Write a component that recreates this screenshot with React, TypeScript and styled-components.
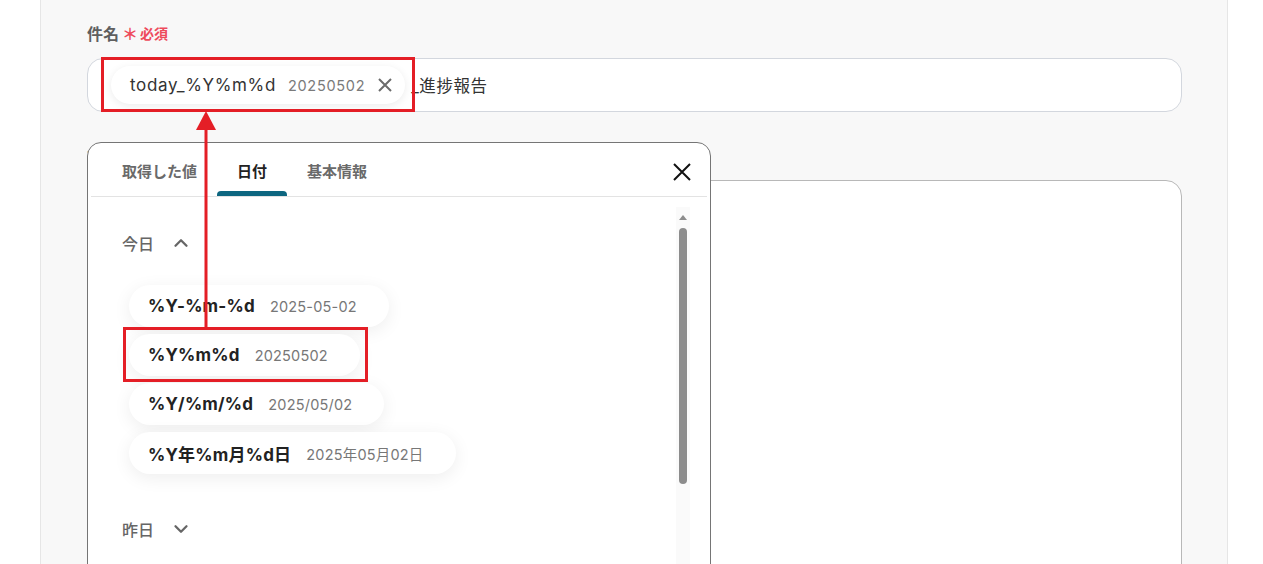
import React from "react";
import styled, { createGlobalStyle } from "styled-components";
import { ChevronDown, ChevronUp } from "lucide-react";

const GlobalStyle = createGlobalStyle`
    html, body {
        margin: 0;
        padding: 0;
        background: #ffffff;
        overflow: hidden;
    }
    body {
        font-family: Inter, "Noto Sans CJK JP", "Noto Sans", sans-serif;
        color: #333;
    }
`;

const Page = styled.div`
    position: relative;
    height: 564px;
    overflow: hidden;
`;

const Panel = styled.div`
    margin: 0 35px 0 40px;
    height: 100%;
    background: #f8f8f8;
    border-left: 1px solid #e6e6e6;
    border-right: 1px solid #e6e6e6;
    padding: 21px 45px 0 46px;
    box-sizing: border-box;
`;

const Field = styled.div`
    display: flex;
    flex-direction: column;
    gap: 13px;
    margin-bottom: 31px;
`;

const Label = styled.div`
    display: flex;
    align-items: center;
    gap: 3px;
    height: 24px;
    font-size: 16px;
    font-weight: 600;
    color: #5f5f5f;
`;

const Required = styled.span`
    color: #ee4b5c;
    font-size: 14px;
    font-weight: 600;
    display: flex;
    align-items: center;
    gap: 2px;
`;

const Star = styled.span`
    font-family: "Noto Sans CJK JP", sans-serif;
    font-size: 16px;
    font-weight: 700;
    line-height: 1;
`;

const InputBox = styled.div`
    position: relative;
    display: flex;
    align-items: center;
    height: 54px;
    box-sizing: border-box;
    background: #fff;
    border: 1px solid #d3d7de;
    border-radius: 16px;
    padding-left: 23px;
    font-size: 16.5px;
    color: #333;
    letter-spacing: 0.6px;
`;

const TextArea = styled.div`
    height: 420px;
    background: #fff;
    border: 1px solid #b8b8b8;
    border-radius: 16px;
`;

const ValueChip = styled.span`
    display: inline-flex;
    align-items: center;
    height: 38px;
    padding: 0 13px 0 19px;
    border-radius: 19px;
    background: #fff;
    box-shadow: 0 2px 8px rgba(0, 0, 0, 0.08);
    margin-right: 6px;
    letter-spacing: 0;
`;

const ChipName = styled.span`
    font-size: 17px;
    color: #333;
    letter-spacing: 0.65px;
`;

const ChipValue = styled.span`
    font-size: 14.5px;
    color: #7a7a7a;
    margin-left: 12px;
    letter-spacing: 0.7px;
`;

const ChipClose = styled.span`
    display: inline-flex;
    margin-left: 13px;
`;

const Popup = styled.div`
    position: absolute;
    top: calc(100% + 31px);
    left: -1px;
    width: 624px;
    height: 440px;
    box-sizing: border-box;
    background: #fff;
    border: 1px solid #757575;
    border-radius: 14px;
    display: flex;
    flex-direction: column;
    z-index: 5;
    letter-spacing: 0;
`;

const TabBar = styled.div`
    display: flex;
    align-items: stretch;
    height: 53px;
    margin: 0 3px;
    padding-left: 11px;
    border-bottom: 1px solid #e3e3e3;
`;

const Tab = styled.div<{ $active?: boolean }>`
    position: relative;
    display: flex;
    align-items: center;
    padding: 2px 20px 0;
    font-size: 15px;
    font-weight: 600;
    color: ${(p) => (p.$active ? "#222" : "#6a6a6a")};

    &::after {
        content: "";
        display: ${(p) => (p.$active ? "block" : "none")};
        position: absolute;
        left: 0;
        right: 0;
        bottom: 0;
        height: 5px;
        border-radius: 4px 4px 0 0;
        background: #0d6680;
    }
`;

const CloseButton = styled.div`
    margin-left: auto;
    display: flex;
    align-items: center;
    padding-right: 16px;
    padding-top: 4px;
`;

const Body = styled.div`
    flex: 1;
    display: flex;
    min-height: 0;
`;

const Content = styled.div`
    flex: 1;
    padding: 34px 0 0 34px;
    display: flex;
    flex-direction: column;
`;

const SectionHeader = styled.div`
    display: flex;
    align-items: center;
    gap: 16px;
    height: 24px;
    font-size: 16px;
    font-weight: 500;
    color: #666;
`;

const ChipList = styled.div`
    display: flex;
    flex-direction: column;
    align-items: flex-start;
    gap: 7px;
    padding: 30px 0 43px 7px;
`;

const FormatChip = styled.div`
    display: flex;
    align-items: center;
    height: 42px;
    padding: 0 32px 0 19px;
    border-radius: 21px;
    background: #fff;
    box-shadow: 0 4px 18px rgba(0, 0, 0, 0.07);
`;

const FormatName = styled.span`
    font-size: 17px;
    font-weight: 700;
    color: #222;
    letter-spacing: 0.2px;
`;

const FormatValue = styled.span`
    font-size: 14.5px;
    color: #777;
    margin-left: 15px;
    letter-spacing: 0.2px;
`;

const ScrollTrack = styled.div`
    width: 14px;
    margin: 10px 20px 0 0;
    background: #fafafa;
    display: flex;
    flex-direction: column;
    align-items: center;
`;

const ScrollArrow = styled.div`
    margin-top: 8px;
    width: 0;
    height: 0;
    border-left: 4px solid transparent;
    border-right: 4px solid transparent;
    border-bottom: 5px solid #8c8c8c;
`;

const ScrollThumb = styled.div`
    margin-top: 8px;
    width: 8px;
    height: 256px;
    border-radius: 4px;
    background: #8c8c8c;
`;

const Highlight = styled.div`
    position: absolute;
    border: 3px solid #e41e26;
    box-sizing: border-box;
    pointer-events: none;
    z-index: 10;
`;

const Arrow = styled.svg`
    position: absolute;
    left: 195px;
    top: 110px;
    z-index: 10;
`;

const formats = [
    { name: "%Y-%m-%d", value: "2025-05-02" },
    { name: "%Y%m%d", value: "20250502" },
    { name: "%Y/%m/%d", value: "2025/05/02" },
    { name: "%Y年%m月%d日", value: "2025年05月02日" }
];

const CrossIcon = ({ size, color, width }: { size: number; color: string; width: number }) => (
    <svg width={size} height={size} viewBox={`0 0 ${size} ${size}`}>
        <path d={`M1 1 L${size - 1} ${size - 1} M${size - 1} 1 L1 ${size - 1}`} stroke={color} strokeWidth={width} />
    </svg>
);

export default function App() {
    return (
        <Page>
            <GlobalStyle />
            <Panel>
                <Field>
                    <Label>
                        件名
                        <Required>
                            <Star>＊</Star>必須
                        </Required>
                    </Label>
                    <InputBox>
                        <ValueChip>
                            <ChipName>today_%Y%m%d</ChipName>
                            <ChipValue>20250502</ChipValue>
                            <ChipClose>
                                <CrossIcon size={14} color="#6b6b6b" width={2} />
                            </ChipClose>
                        </ValueChip>
                        _進捗報告
                        <Popup>
                            <TabBar>
                                <Tab>取得した値</Tab>
                                <Tab $active>日付</Tab>
                                <Tab>基本情報</Tab>
                                <CloseButton>
                                    <CrossIcon size={18} color="#111" width={2} />
                                </CloseButton>
                            </TabBar>
                            <Body>
                                <Content>
                                    <SectionHeader>
                                        今日
                                        <ChevronUp size={22} strokeWidth={2.5} color="#666" />
                                    </SectionHeader>
                                    <ChipList>
                                        {formats.map((f) => (
                                            <FormatChip key={f.name}>
                                                <FormatName>{f.name}</FormatName>
                                                <FormatValue>{f.value}</FormatValue>
                                            </FormatChip>
                                        ))}
                                    </ChipList>
                                    <SectionHeader>
                                        昨日
                                        <ChevronDown size={22} strokeWidth={2.5} color="#666" />
                                    </SectionHeader>
                                </Content>
                                <ScrollTrack>
                                    <ScrollArrow />
                                    <ScrollThumb />
                                </ScrollTrack>
                            </Body>
                        </Popup>
                    </InputBox>
                </Field>
                <Field>
                    <Label>本文</Label>
                    <TextArea />
                </Field>
            </Panel>
            <Highlight style={{ left: 101, top: 57, width: 314, height: 55 }} />
            <Highlight style={{ left: 123, top: 327, width: 245, height: 55 }} />
            <Arrow width="22" height="220" viewBox="0 0 22 220">
                <path d="M1 20 L11 1 L21 20 Z" fill="#e41e26" />
                <rect x="9.5" y="18" width="3" height="200" fill="#e41e26" />
            </Arrow>
        </Page>
    );
}
